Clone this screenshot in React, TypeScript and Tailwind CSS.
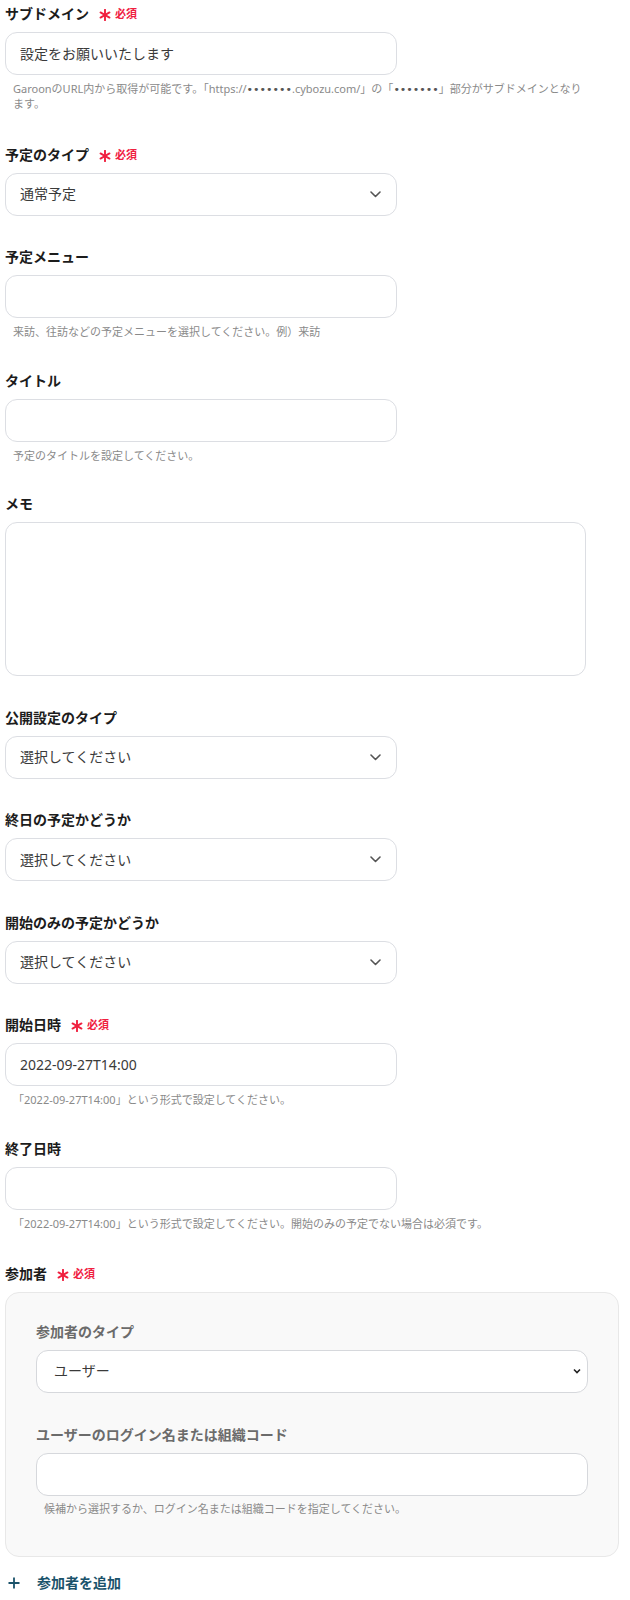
import React from 'react';

type FieldKind = 'input' | 'select' | 'textarea';

interface Field {
  label: string;
  required?: boolean;
  kind: FieldKind;
  value?: string;
  help?: React.ReactNode;
}

// small dots used to mask the subdomain
const Dots = () => <span className="font-['DejaVu_Sans',sans-serif] text-[#555]">•••••••</span>;

const fields: Field[] = [
  {
    label: 'サブドメイン',
    required: true,
    kind: 'input',
    value: '設定をお願いいたします',
    help: (
      <>
        GaroonのURL内から取得が可能です。「https://<Dots />.cybozu.com/」の「<Dots />」部分がサブドメインとなります。
      </>
    ),
  },
  { label: '予定のタイプ', required: true, kind: 'select', value: '通常予定' },
  { label: '予定メニュー', kind: 'input', help: '来訪、往訪などの予定メニューを選択してください。例）来訪' },
  { label: 'タイトル', kind: 'input', help: '予定のタイトルを設定してください。' },
  { label: 'メモ', kind: 'textarea' },
  { label: '公開設定のタイプ', kind: 'select', value: '選択してください' },
  { label: '終日の予定かどうか', kind: 'select', value: '選択してください' },
  { label: '開始のみの予定かどうか', kind: 'select', value: '選択してください' },
  {
    label: '開始日時',
    required: true,
    kind: 'input',
    value: '2022-09-27T14:00',
    help: '「2022-09-27T14:00」という形式で設定してください。',
  },
  {
    label: '終了日時',
    kind: 'input',
    help: '「2022-09-27T14:00」という形式で設定してください。開始のみの予定でない場合は必須です。',
  },
];

function Asterisk() {
  return (
    <svg width="12" height="12" viewBox="0 0 12 12" className="shrink-0 mt-[2px]">
      <g stroke="#f0203f" strokeWidth="1.9" strokeLinecap="round">
        <line x1="6" y1="0.8" x2="6" y2="11.2" />
        <line x1="1.5" y1="3.4" x2="10.5" y2="8.6" />
        <line x1="1.5" y1="8.6" x2="10.5" y2="3.4" />
      </g>
    </svg>
  );
}

function Chevron({ small = false }: { small?: boolean }) {
  if (small) {
    return (
      <svg width="8" height="6" viewBox="0 0 8 6" className="shrink-0">
        <path d="M1 1.5 L4 4.5 L7 1.5" fill="none" stroke="#222" strokeWidth="1.6" />
      </svg>
    );
  }
  return (
    <svg width="11" height="7" viewBox="0 0 11 7" className="shrink-0">
      <path d="M1 1 L5.5 5.5 L10 1" fill="none" stroke="#555" strokeWidth="1.6" strokeLinecap="round" strokeLinejoin="round" />
    </svg>
  );
}

function Label({ text, required, muted = false }: { text: string; required?: boolean; muted?: boolean }) {
  return (
    <div className="flex items-center h-5 mb-2">
      <span className={`text-sm font-bold leading-5 ${muted ? 'text-[#6b6b6b]' : 'text-[#1c1c1c]'}`}>{text}</span>
      {required && (
        <span className="flex items-center ml-[10px] gap-[4px]">
          <Asterisk />
          <span className="text-[11px] font-bold text-[#f0203f] leading-5">必須</span>
        </span>
      )}
    </div>
  );
}

function Help({ children }: { children: React.ReactNode }) {
  return <p className="mt-[7px] pl-2 pr-[4px] text-[11px] leading-[14px] text-[#8a8a8a]">{children}</p>;
}

function Control({ field }: { field: Field }) {
  if (field.kind === 'textarea') {
    return <div className="h-[154px] w-[581px] rounded-xl border border-[#dcdee3] bg-white"></div>;
  }
  return (
    <div className="flex items-center justify-between h-[43px] w-[392px] rounded-xl border border-[#dcdee3] bg-white pl-[14px] pr-[15px]">
      <span className="text-sm text-[#3a3a3a]">{field.value ?? ''}</span>
      {field.kind === 'select' && <Chevron />}
    </div>
  );
}

export default function App() {
  return (
    <div className="bg-white min-h-[1600px] pl-[5px] pt-1 font-['Noto_Sans','Noto_Sans_CJK_JP',sans-serif]">
      <div className="w-[583px] flex flex-col gap-[31.5px]">
        {fields.map((f, i) => (
          <div key={i} className={i === 0 ? 'pb-[2px]' : ''}>
            <Label text={f.label} required={f.required} />
            <Control field={f} />
            {f.help && <Help>{f.help}</Help>}
          </div>
        ))}
      </div>

      {/* Participants */}
      <div className="mt-[33px] w-[614px]">
        <Label text="参加者" required />
        <div className="rounded-[14px] border border-[#e8e8e8] bg-[#f9f9f9] px-[30px] pt-[29px] pb-[40px]">
          <Label text="参加者のタイプ" muted />
          <div className="flex items-center justify-between h-[43px] rounded-xl border border-[#d6d8dc] bg-white pl-[17px] pr-[6px]">
            <span className="text-sm text-[#3a3a3a]">ユーザー</span>
            <Chevron small />
          </div>
          <div className="mt-8">
            <Label text="ユーザーのログイン名または組織コード" muted />
            <div className="h-[43px] rounded-xl border border-[#d6d8dc] bg-white"></div>
            <p className="mt-[6px] pl-2 text-[11px] leading-[14px] text-[#8a8a8a]">
              候補から選択するか、ログイン名または組織コードを指定してください。
            </p>
          </div>
        </div>
        <button className="mt-[16px] flex items-center h-5 pl-[3px] text-sm font-bold text-[#1b536b]">
          <svg width="12" height="12" viewBox="0 0 12 12" className="mr-[17px]">
            <path d="M6 0.5 V11.5 M0.5 6 H11.5" stroke="#1b536b" strokeWidth="1.8" />
          </svg>
          参加者を追加
        </button>
      </div>
    </div>
  );
}
